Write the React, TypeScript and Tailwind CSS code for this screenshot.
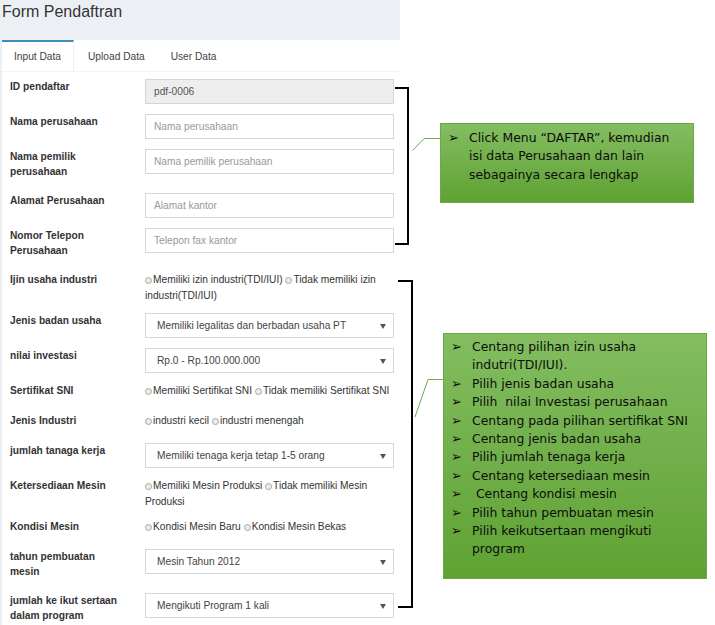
import { Fragment } from 'react'

type Field =
  | { label: string; kind: 'input'; placeholder?: string; value?: string }
  | { label: string; kind: 'select'; value: string }
  | { label: string; kind: 'radio'; options: string[] }

const fields: Field[] = [
  { label: 'ID pendaftar', kind: 'input', value: 'pdf-0006' },
  { label: 'Nama perusahaan', kind: 'input', placeholder: 'Nama perusahaan' },
  { label: 'Nama pemilik perusahaan', kind: 'input', placeholder: 'Nama pemilik perusahaan' },
  { label: 'Alamat Perusahaan', kind: 'input', placeholder: 'Alamat kantor' },
  { label: 'Nomor Telepon Perusahaan', kind: 'input', placeholder: 'Telepon fax kantor' },
  {
    label: 'Ijin usaha industri',
    kind: 'radio',
    options: ['Memiliki izin industri(TDI/IUI)', 'Tidak memiliki izin industri(TDI/IUI)'],
  },
  { label: 'Jenis badan usaha', kind: 'select', value: 'Memiliki legalitas dan berbadan usaha PT' },
  { label: 'nilai investasi', kind: 'select', value: 'Rp.0 - Rp.100.000.000' },
  { label: 'Sertifikat SNI', kind: 'radio', options: ['Memiliki Sertifikat SNI', 'Tidak memiliki Sertifikat SNI'] },
  { label: 'Jenis Industri', kind: 'radio', options: ['industri kecil', 'industri menengah'] },
  { label: 'jumlah tanaga kerja', kind: 'select', value: 'Memiliki tenaga kerja tetap 1-5 orang' },
  {
    label: 'Ketersediaan Mesin',
    kind: 'radio',
    options: ['Memiliki Mesin Produksi', 'Tidak memiliki Mesin Produksi'],
  },
  { label: 'Kondisi Mesin', kind: 'radio', options: ['Kondisi Mesin Baru', 'Kondisi Mesin Bekas'] },
  { label: 'tahun pembuatan mesin', kind: 'select', value: 'Mesin Tahun 2012' },
  { label: 'jumlah ke ikut sertaan dalam program', kind: 'select', value: 'Mengikuti Program 1 kali' },
]

// each entry is one bullet, wrapped lines are split by \n
const intro = ['Click Menu “DAFTAR”, kemudian\nisi data Perusahaan dan lain\nsebagainya secara lengkap']
const steps = [
  'Centang pilihan izin usaha\nindutri(TDI/IUI).',
  'Pilih jenis badan usaha',
  'Pilih  nilai Investasi perusahaan',
  'Centang pada pilihan sertifikat SNI',
  'Centang jenis badan usaha',
  'Pilih jumlah tenaga kerja',
  'Centang ketersediaan mesin',
  ' Centang kondisi mesin',
  'Pilih tahun pembuatan mesin',
  'Pilih keikutsertaan mengikuti\nprogram',
]

function Radio() {
  return (
    <span className="inline-block w-[7px] h-[7px] rounded-full border border-[#a6a6a6] bg-[#ececec] align-[-0.5px] mr-[1px]" />
  )
}

function Control({ field }: { field: Field }) {
  if (field.kind === 'input') {
    return (
      <input
        readOnly={!!field.value}
        defaultValue={field.value}
        placeholder={field.placeholder}
        className={
          'w-[249px] h-[25px] border border-[#d2d6de] px-[8px] text-[10.2px] text-[#555] placeholder:text-[#999] outline-none ' +
          (field.value ? 'bg-[#eeeeee]' : 'bg-white')
        }
      />
    )
  }
  if (field.kind === 'select') {
    return (
      <div className="relative w-[249px] h-[25px] border border-[#d2d6de] bg-white flex items-center pl-[11px] text-[10.2px] text-[#444]">
        {field.value}
        <svg className="absolute right-[7px] top-[10px]" width="6" height="5" viewBox="0 0 6 5">
          <path d="M0 0H6L3 5Z" fill="#555" />
        </svg>
      </div>
    )
  }
  return (
    <div className="w-[254px] min-h-[20px] text-[10.2px] leading-[15.5px] text-[#333]">
      {field.options.map((o, i) => (
        <Fragment key={o}>
          {i > 0 && ' '}
          <Radio />
          {o}
        </Fragment>
      ))}
    </div>
  )
}

function Callout({ items, className }: { items: string[]; className: string }) {
  return (
    <div
      className={
        'absolute border border-[#6ea64b] bg-linear-to-b from-[#83bd60] to-[#5fa232] text-[#0d0d0d] font-["DejaVu_Sans",Verdana,sans-serif] text-[12.4px] leading-[18.4px] ' +
        className
      }
    >
      {items.map((item, i) => (
        <div key={i} className="flex">
          <span className="w-[21px] shrink-0 text-[13px] leading-[18.4px]">➢</span>
          <span className="whitespace-pre">{item}</span>
        </div>
      ))}
    </div>
  )
}

export default function App() {
  return (
    <div className="relative w-[715px] h-[625px] overflow-hidden bg-white font-['Liberation_Sans',Arial,sans-serif]">
      <div className="w-[400px] h-full bg-[#ecf0f5] pl-[2px] flex flex-col">
        <div className="h-[40px] shrink-0 pt-[4px]">
          <h1 className="text-[16px] leading-[16px] text-[#333]">Form Pendaftran</h1>
        </div>
        <div className="flex-1 bg-white">
          <div className="flex h-[32px] border-b border-[#f4f4f4] text-[10.2px] text-[#444]">
            <div className="flex items-center px-[12px] mr-[2px] border-t-2 border-[#3c8dbc] border-r border-r-[#f0f0f0] bg-white">
              Input Data
            </div>
            <div className="flex items-center px-[12px] mr-[2px] border-t-2 border-transparent">Upload Data</div>
            <div className="flex items-center px-[12px] border-t-2 border-transparent">User Data</div>
          </div>
          <div className="pt-[7px] pl-[8px]">
            {fields.map((f) => (
              <div key={f.label} className="flex items-start mb-[10px]">
                <div className="w-[135px] pr-[23px] pb-[4px] text-[10.2px] leading-[15px] font-bold text-[#333]">
                  {f.label}
                </div>
                <Control field={f} />
              </div>
            ))}
          </div>
        </div>
      </div>

      <svg className="absolute left-0 top-0 pointer-events-none" width="715" height="625">
        <path d="M395 88H408V244H395" fill="none" stroke="#000" strokeWidth="2" />
        <path d="M398 281H412V607H398" fill="none" stroke="#000" strokeWidth="2" />
        <path d="M412.5 150.5L424 138.5H440" fill="none" stroke="#70ad47" strokeWidth="1" />
        <path d="M415 417L428 379.5H443" fill="none" stroke="#70ad47" strokeWidth="1" />
      </svg>

      <Callout className="left-[440px] top-[123px] w-[254px] h-[80px] pt-[5px] pl-[7px]" items={intro} />
      <Callout className="left-[443px] top-[333px] w-[264px] h-[246px] pt-[4px] pl-[7px]" items={steps} />
    </div>
  )
}
